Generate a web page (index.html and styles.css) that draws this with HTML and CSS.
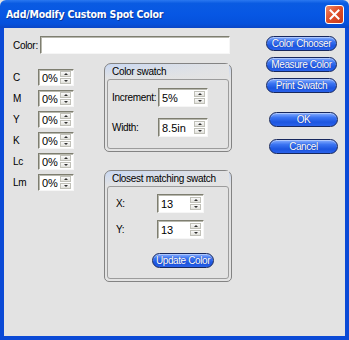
FILE: index.html
```html
<!DOCTYPE html>
<html lang="en">
	<head>
		<meta charset="UTF-8">
		<title>Add/Modify Custom Spot Color</title>
		<link rel="stylesheet" href="styles.css">
	</head>
	<body>
		<div class="window">
			<div class="titlebar">
				<span class="title">Add/Modify Custom Spot Color</span>
				<div class="close">
					<svg width="11" height="11" viewBox="0 0 11 11">
						<path d="M1.5 1.5 L9.5 9.5 M9.5 1.5 L1.5 9.5" stroke="#ffffff" stroke-width="2" stroke-linecap="square"></path>
					</svg>
				</div>
			</div>

			<div class="client">
				<div class="left">
					<div class="color-row">
						<label>Color:</label>
						<div class="field wide"></div>
					</div>

					<div class="lower">
						<div class="channels">
							<div class="row"><label>C</label><div class="spin small"><span class="value">0%</span><div class="arrows"><div class="arrow up"></div><div class="arrow down"></div></div></div></div>
							<div class="row"><label>M</label><div class="spin small"><span class="value">0%</span><div class="arrows"><div class="arrow up"></div><div class="arrow down"></div></div></div></div>
							<div class="row"><label>Y</label><div class="spin small"><span class="value">0%</span><div class="arrows"><div class="arrow up"></div><div class="arrow down"></div></div></div></div>
							<div class="row"><label>K</label><div class="spin small"><span class="value">0%</span><div class="arrows"><div class="arrow up"></div><div class="arrow down"></div></div></div></div>
							<div class="row"><label>Lc</label><div class="spin small"><span class="value">0%</span><div class="arrows"><div class="arrow up"></div><div class="arrow down"></div></div></div></div>
							<div class="row"><label>Lm</label><div class="spin small"><span class="value">0%</span><div class="arrows"><div class="arrow up"></div><div class="arrow down"></div></div></div></div>
						</div>

						<div class="groups">
							<div class="group swatch">
								<div class="group-title">Color swatch</div>
								<div class="group-body">
									<div class="grow"><label>Increment:</label><div class="spin medium"><span class="value">5%</span><div class="arrows"><div class="arrow up"></div><div class="arrow down"></div></div></div></div>
									<div class="grow"><label>Width:</label><div class="spin medium"><span class="value">8.5in</span><div class="arrows"><div class="arrow up"></div><div class="arrow down"></div></div></div></div>
								</div>
							</div>

							<div class="group closest">
								<div class="group-title">Closest matching swatch</div>
								<div class="group-body">
									<div class="grow xy"><label>X:</label><div class="spin narrow"><span class="value">13</span><div class="arrows"><div class="arrow up"></div><div class="arrow down"></div></div></div></div>
									<div class="grow xy"><label>Y:</label><div class="spin narrow"><span class="value">13</span><div class="arrows"><div class="arrow up"></div><div class="arrow down"></div></div></div></div>
									<div class="update-row"><button class="pill update">Update Color</button></div>
								</div>
							</div>
						</div>
					</div>
				</div>

				<div class="actions">
					<button class="pill">Color Chooser</button>
					<button class="pill">Measure Color</button>
					<button class="pill">Print Swatch</button>
					<button class="pill ok">OK</button>
					<button class="pill cancel">Cancel</button>
				</div>
			</div>
		</div>
	</body>
</html>
```

FILE: styles.css
```css
body {
    margin: 0;
    font-family: "Liberation Sans", Arial, sans-serif;
    font-size: 10px;
    letter-spacing: -0.3px;
    color: #000000;
    background-color: #e3e3e3;
}

label {
    white-space: nowrap;
    flex: none;
}

.window {
    width: 349px;
    height: 340px;
    display: flex;
    flex-direction: column;
    box-sizing: border-box;
}

/* title bar */
.titlebar {
    height: 28px;
    flex: none;
    display: flex;
    align-items: center;
    justify-content: space-between;
    padding: 0 5px 0 6px;
    background: linear-gradient(#2a78f0 0%, #0a5be2 12%, #0757e4 50%, #0551dc 85%, #0a46c6 100%);
    border-radius: 6px 6px 0 0;
}

.title {
    color: #ffffff;
    font-weight: bold;
    font-size: 10.5px;
    letter-spacing: -0.2px;
    font-family: "DejaVu Sans Condensed", "Liberation Sans", sans-serif;
    text-shadow: 1px 1px #0b3596;
    white-space: nowrap;
}

.close {
    width: 19px;
    height: 19px;
    box-sizing: border-box;
    border: 1px solid #ffffff;
    border-radius: 3px;
    background: linear-gradient(135deg, #f08a6a 0%, #e0502a 45%, #c9391a 100%);
    display: flex;
    align-items: center;
    justify-content: center;
}

/* client area */
.client {
    flex: 1;
    display: flex;
    padding: 8px 0 0 9px;
    border-left: 4px solid #0b4ad6;
    border-right: 4px solid #0b4ad6;
    border-bottom: 4px solid #0b4ad6;
    background-color: #e3e3e3;
}

.left {
    width: 219px;
    flex: none;
}

.color-row {
    display: flex;
    align-items: center;
    height: 18px;
}

.color-row label {
    width: 27px;
}

.field {
    height: 18px;
    box-sizing: border-box;
    background-color: #ffffff;
    border: 1px solid;
    border-color: #7e7e70 #f6f6f6 #f6f6f6 #7e7e70;
    box-shadow: inset 1px 1px #b8b8ae;
}

.field.wide {
    width: 190px;
}

.lower {
    display: flex;
    margin-top: 9px;
}

.channels {
    width: 61px;
    flex: none;
    padding-top: 6px;
    display: flex;
    flex-direction: column;
    gap: 4px;
}

.row {
    display: flex;
    align-items: center;
    height: 17px;
}

.row label {
    width: 25px;
}

/* spin boxes */
.spin {
    display: flex;
    align-items: center;
    flex: none;
    box-sizing: border-box;
    background-color: #ffffff;
    border: 1px solid;
    border-color: #7e7e70 #f6f6f6 #f6f6f6 #7e7e70;
    box-shadow: inset 1px 1px #b8b8ae;
    padding: 0 2px 0 3px;
}

.spin .value {
    flex: 1;
    font-size: 11px;
    letter-spacing: 0;
    white-space: nowrap;
}

.spin.small {
    width: 36px;
    height: 17px;
}

.spin.medium {
    width: 50px;
    height: 19px;
}

.spin.narrow {
    width: 47px;
    height: 19px;
}

.arrows {
    display: flex;
    flex-direction: column;
    gap: 1px;
}

.arrow {
    width: 11px;
    height: 6px;
    box-sizing: border-box;
    border: 1px solid #c0c0b8;
    background: linear-gradient(#fafafa, #e0e0da);
    display: flex;
    align-items: center;
    justify-content: center;
}

.arrow::after {
    content: "";
    width: 0;
    height: 0;
    border-left: 2px solid transparent;
    border-right: 2px solid transparent;
}

.arrow.up::after {
    border-bottom: 2px solid #303030;
}

.arrow.down::after {
    border-top: 2px solid #303030;
}

/* group boxes */
.groups {
    width: 128px;
    flex: none;
    margin-left: 30px;
    display: flex;
    flex-direction: column;
    gap: 18px;
}

.group {
    box-sizing: border-box;
    border: 1px solid #838383;
    border-radius: 7px 7px 5px 5px;
    padding: 0 2px 2px 2px;
    display: flex;
    flex-direction: column;
    background: linear-gradient(180deg, #c9d8f2 0px, #e3e3e3 15px);
}

.group.swatch {
    height: 89px;
}

.group.closest {
    height: 112px;
}

.group-title {
    height: 15px;
    line-height: 15px;
    padding-left: 5px;
    white-space: nowrap;
    background: linear-gradient(90deg, rgba(227, 227, 227, 0) 0%, #e3e3e3 100%);
}

.group-body {
    flex: 1;
    border: 1px solid #9c9c9c;
    border-radius: 3px;
    background-color: #e3e3e3;
}

.swatch .group-body {
    padding: 8px 0 0 4px;
    display: flex;
    flex-direction: column;
    gap: 11px;
}

.closest .group-body {
    padding: 7px 0 0 8px;
    display: flex;
    flex-direction: column;
    gap: 7px;
}

.grow {
    display: flex;
    align-items: center;
}

.grow label {
    width: 46px;
}

.grow.xy label {
    width: 41px;
}

.update-row {
    padding-left: 36px;
    margin-top: 7px;
}

/* pill buttons */
.pill {
    display: block;
    box-sizing: border-box;
    height: 15px;
    padding: 0;
    border: 1px solid #17285e;
    border-radius: 8px;
    background: linear-gradient(#8ab0ff 0%, #3b74f2 35%, #1c55e0 70%, #2a62ea 100%);
    box-shadow: inset 0 1px rgba(255, 255, 255, 0.35);
    color: #ffffff;
    font-family: "Liberation Sans", sans-serif;
    font-size: 10px;
    letter-spacing: -0.4px;
    line-height: 13px;
    text-align: center;
    white-space: nowrap;
    text-shadow: 0 0 1px #0a2a90;
}

.pill.update {
    width: 62px;
}

.actions {
    margin-left: 34px;
    width: 72px;
    display: flex;
    flex-direction: column;
    gap: 6px;
}

.actions .pill {
    width: 71px;
}

.actions .pill.ok {
    margin-top: 13px;
    margin-left: 3px;
    width: 69px;
}

.actions .pill.cancel {
    margin-top: 6px;
    margin-left: 3px;
    width: 69px;
}
```
